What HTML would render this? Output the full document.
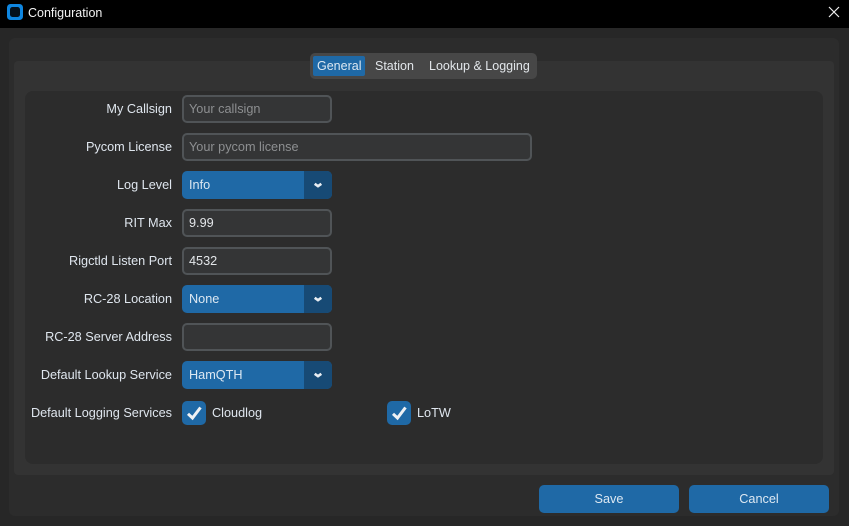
<!DOCTYPE html>
<html><head><meta charset="utf-8">
<style>
html,body{margin:0;padding:0;width:849px;height:526px;overflow:hidden;background:#272727;font-family:"Liberation Sans",sans-serif;font-size:12.7px;color:#dfe6ee}
.a{position:absolute;box-sizing:border-box}
.t{position:absolute;white-space:nowrap;line-height:16px}
.l{position:absolute;right:677px;white-space:nowrap;line-height:16px;text-align:right}
.i{position:absolute;box-sizing:border-box;left:182px;width:150px;height:28px;background:#343536;border:2px solid #505457;border-radius:5px;padding:0 5px;line-height:24px;color:#e3e6e9;white-space:nowrap}
.ph{color:#8d8f91}
.s{position:absolute;box-sizing:border-box;left:182px;width:150px;height:28px;background:#1f69a6;border-radius:5px;padding-left:7px;line-height:28px;color:#dce8f2;overflow:hidden}
.s i{position:absolute;right:0;top:0;width:28px;height:28px;background:#174a75}
.s svg{position:absolute;right:0;top:0}
.c{position:absolute;box-sizing:border-box;top:401px;width:24px;height:24px;background:#1f69a6;border-radius:5px}
.b{position:absolute;box-sizing:border-box;top:485px;width:140px;height:28px;background:#1f69a6;border-radius:5px;text-align:center;line-height:28px;color:#dce8f2}
</style></head><body>
<div class="a" style="left:0;top:0;width:849px;height:28px;background:#000"></div>
<svg class="a" style="left:7px;top:4px" width="16" height="16" viewBox="0 0 16 16"><rect width="16" height="16" rx="3.500" fill="#0f86e0"/><rect x="3" y="3" width="10" height="10" rx="2.500" fill="#03101c"/></svg>
<div class="t" style="left:28px;top:5px;color:#f2f2f2;font-size:12.500px">Configuration</div>
<svg class="a" style="left:828px;top:6px" width="12" height="12" viewBox="0 0 12 12"><path d="M1 1L11 11M11 1L1 11" stroke="#eee" stroke-width="1.200" fill="none"/></svg>

<div class="a" style="left:9px;top:38px;width:830px;height:478px;background:#2c2c2c;border-radius:6px"></div>
<div class="a" style="left:14px;top:61px;width:820px;height:414px;background:#333;border-radius:4px"></div>
<div class="a" style="left:25px;top:91px;width:798px;height:373px;background:#2c2c2c;border-radius:8px"></div>

<div class="a" style="left:310px;top:53px;width:227px;height:26px;background:#474747;border-radius:5px"></div>
<div class="a" style="left:313px;top:56px;width:52px;height:20px;background:#1f69a6;border-radius:2px"></div>
<div class="t" style="left:317px;top:58px;color:#dce8f2;font-size:12.500px">General</div>
<div class="t" style="left:375px;top:58px;color:#e2e6ea;font-size:12.500px">Station</div>
<div class="t" style="left:429px;top:58px;color:#e2e6ea;font-size:12.500px">Lookup &amp; Logging</div>

<div class="l" style="top:101px">My Callsign</div>
<div class="i ph" style="top:95px">Your callsign</div>
<div class="l" style="top:139px">Pycom License</div>
<div class="i ph" style="top:133px;width:350px">Your pycom license</div>
<div class="l" style="top:177px">Log Level</div>
<div class="s" style="top:171px">Info<i></i><svg width="28" height="28" viewBox="0 0 28 28"><path d="M10.700 12.800L14 15.200L17.300 12.800" stroke="#e8edf2" stroke-width="2.600" fill="none"/></svg></div>
<div class="l" style="top:215px">RIT Max</div>
<div class="i" style="top:209px">9.99</div>
<div class="l" style="top:253px">Rigctld Listen Port</div>
<div class="i" style="top:247px">4532</div>
<div class="l" style="top:291px">RC-28 Location</div>
<div class="s" style="top:285px">None<i></i><svg width="28" height="28" viewBox="0 0 28 28"><path d="M10.700 12.800L14 15.200L17.300 12.800" stroke="#e8edf2" stroke-width="2.600" fill="none"/></svg></div>
<div class="l" style="top:329px">RC-28 Server Address</div>
<div class="i" style="top:323px"></div>
<div class="l" style="top:367px">Default Lookup Service</div>
<div class="s" style="top:361px">HamQTH<i></i><svg width="28" height="28" viewBox="0 0 28 28"><path d="M10.700 12.800L14 15.200L17.300 12.800" stroke="#e8edf2" stroke-width="2.600" fill="none"/></svg></div>
<div class="l" style="top:405px">Default Logging Services</div>

<div class="c" style="left:182px"><svg width="24" height="24" viewBox="0 0 24 24"><path d="M6 12.800L10.500 17L18.500 6.500" stroke="#eef1f4" stroke-width="3" fill="none"/></svg></div>
<div class="t" style="left:212px;top:405px">Cloudlog</div>
<div class="c" style="left:387px"><svg width="24" height="24" viewBox="0 0 24 24"><path d="M6 12.800L10.500 17L18.500 6.500" stroke="#eef1f4" stroke-width="3" fill="none"/></svg></div>
<div class="t" style="left:417px;top:405px">LoTW</div>

<div class="b" style="left:539px">Save</div>
<div class="b" style="left:689px">Cancel</div>
</body></html>
